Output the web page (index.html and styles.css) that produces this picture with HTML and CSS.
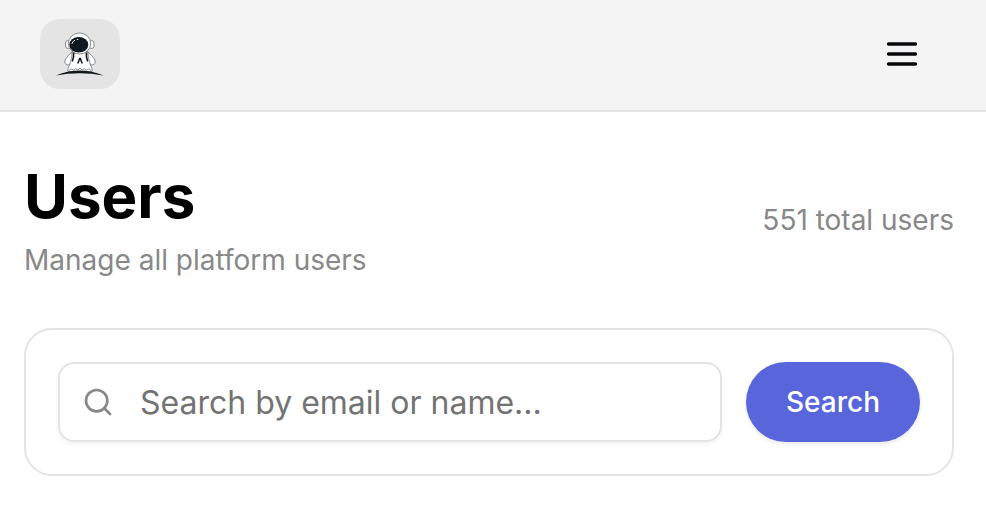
FILE: index.html
```html
<!DOCTYPE html>
<html lang="en">
<head>
  <meta charset="utf-8">
  <meta name="viewport" content="width=device-width, initial-scale=1">
  <title>Users</title>
  <link rel="stylesheet" href="styles.css">
</head>
<body>
  <header class="topbar">
    <a class="logo" href="#" aria-label="Home">
      <svg class="logo-art" viewBox="52 26 56 54" aria-hidden="true">
        <!-- arms -->
        <g fill="#fff" stroke="#5c6266" stroke-width=".7">
          <path d="M72 51Q68 54 65 59Q64 63.500 68 64Q71.500 63.500 73 60Z"/>
          <path d="M88 51Q92 54 95 59Q96 63.500 92 64Q88.500 63.500 87 60Z"/>
          <!-- suit -->
          <path d="M72.500 50Q72 58 69.500 64Q67.500 67 68 70.500H92Q92.500 67 90.500 64Q88 58 87.500 50Z"/>
          <path d="M69 69.500q2-3 4.500-.5q2-2.500 4.500 0l2-2l2 2q2-2.500 4.500 0q2.500-2.500 4.500 .5" fill="none"/>
          <!-- helmet -->
          <rect x="65.500" y="39.500" width="5" height="8" rx="2.500"/>
          <rect x="89" y="39.500" width="5" height="8" rx="2.500"/>
          <ellipse cx="79.500" cy="42.500" rx="11.200" ry="10.500"/>
        </g>
        <!-- horizon -->
        <path d="M56 74.500Q79.500 64.500 103.500 74.500Q79.500 70 56 74.500Z" fill="#14181c"/>
        <path d="M73.700 51.500Q74 56 72.300 60.500M86.300 51.500Q86 56 87.700 60.500" fill="none" stroke="#14181c" stroke-width="1.600"/>
        <ellipse cx="78.800" cy="43.800" rx="9.500" ry="7.700" fill="#111920"/>
        <path d="M71.800 43Q72.500 40 75 39.200M76.800 38.500h1.500" fill="none" stroke="#dfe5e8" stroke-width="1"/>
        <!-- chest mark -->
        <path d="M77.800 62.500L79.700 57.500H80.300L82.200 62.500" fill="none" stroke="#14181c" stroke-width="1.500"/>
      </svg>
    </a>
    <button class="menu-button" type="button" aria-label="Open menu">
      <svg class="menu-icon" viewBox="0 0 40 40" aria-hidden="true">
        <path d="M6.500 10h27M6.500 20h27M6.500 30h27"/>
      </svg>
    </button>
  </header>

  <main class="page">
    <div class="heading">
      <div>
        <h1 class="title">Users</h1>
        <p class="note">Manage all platform users</p>
      </div>
      <p class="note">551 total users</p>
    </div>

    <form class="search-card">
      <label class="search-field">
        <svg class="search-icon" viewBox="0 0 24 24" aria-hidden="true">
          <circle cx="11" cy="11" r="8"/>
          <path d="m21 21-4.300-4.300"/>
        </svg>
        <input class="search-input" type="text" aria-label="Search by email or name" placeholder="Search by email or name...">
      </label>
      <button class="search-button" type="submit">Search</button>
    </form>
  </main>
</body>
</html>
```

FILE: styles.css
```css
* {
  box-sizing: border-box;
}

body {
  margin: 0;
  background: #fff;
  color: #000;
  font-family: Inter, "Liberation Sans", sans-serif;
}

h1,
p {
  margin: 0;
}

.topbar {
  display: flex;
  align-items: center;
  justify-content: space-between;
  padding: 19px 64px 21px 40px;
  border-bottom: 2px solid #e4e4e7;
  background: #f4f4f4;
}

.logo {
  display: grid;
  place-items: center;
  width: 80px;
  height: 70px;
  border-radius: 20px;
  background: #e4e4e4;
}

.logo-art {
  width: 56px;
  height: 54px;
}

.menu-button {
  padding: 0;
  border: 0;
  background: none;
  color: #09090b;
}

.menu-icon {
  display: block;
  width: 40px;
  height: 40px;
  fill: none;
  stroke: currentColor;
  stroke-width: 3.3;
  stroke-linecap: round;
}

.page {
  padding: 48px 32px 44px 24px;
}

.heading {
  display: flex;
  align-items: center;
  justify-content: space-between;
  margin-bottom: 48px;
}

.title {
  margin-bottom: 8px;
  font-size: 60px;
  font-weight: 700;
  line-height: 72px;
}

.note {
  color: #888;
  font-size: 28px;
  line-height: 40px;
}

.search-card {
  display: flex;
  gap: 24px;
  padding: 32px;
  border: 2px solid #e4e4e7;
  border-radius: 28px;
}

.search-field {
  display: flex;
  flex: 1;
  align-items: center;
  gap: 26px;
  height: 80px;
  padding: 0 22px;
  border: 2px solid #e4e4e7;
  border-radius: 16px;
  box-shadow: 0 2px 4px rgb(0 0 0 / 6%);
}

.search-icon {
  flex: none;
  width: 32px;
  height: 32px;
  fill: none;
  stroke: #888;
  stroke-width: 2;
  stroke-linecap: round;
}

.search-input {
  flex: 1;
  min-width: 0;
  padding: 2px 0 0;
  border: 0;
  outline: 0;
  background: none;
  color: #000;
  font: 32px/48px Inter, "Liberation Sans", sans-serif;
}

.search-input::placeholder {
  color: #737373;
}

.search-button {
  height: 80px;
  padding: 0 40px;
  border: 0;
  border-radius: 40px;
  background: #5865db;
  box-shadow: 0 2px 4px rgb(0 0 0 / 10%);
  color: #fff;
  font: 500 28px/40px Inter, "Liberation Sans", sans-serif;
}
```
